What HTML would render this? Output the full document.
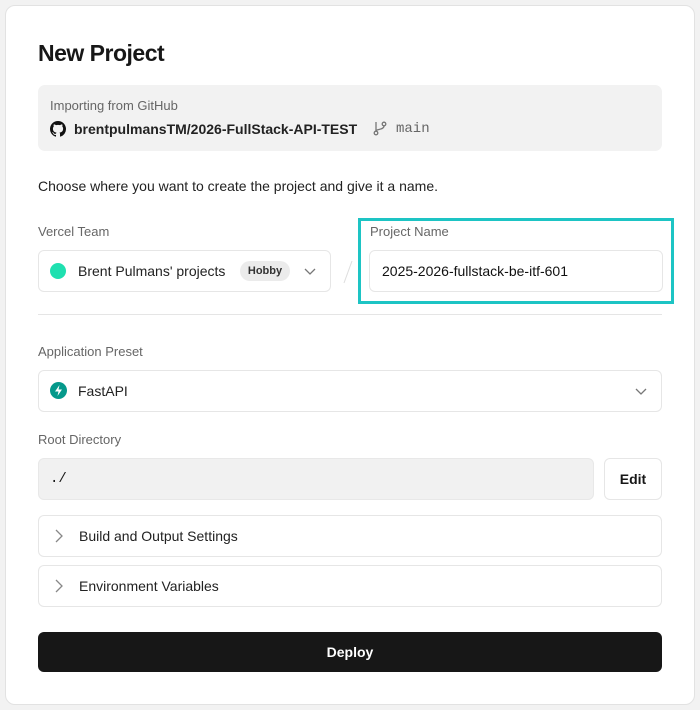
<!DOCTYPE html>
<html><head><style>
*{box-sizing:border-box;margin:0;padding:0}
body{width:700px;height:710px;background:#f2f2f2;font-family:"Liberation Sans",sans-serif;color:#171717;position:relative;overflow:hidden}
.card{position:absolute;left:5px;top:5px;width:690px;height:700px;background:#fff;border:1px solid #e2e2e2;border-radius:10px}
.a{position:absolute}
.box{position:absolute;border:1px solid #e6e6e6;border-radius:6px;background:#fff}
.lbl{position:absolute;font-size:13px;color:#666}
.t{font-size:14px;color:#222}
</style></head><body>
<div class="card"></div>
<div class="a" style="left:38px;top:40px;font-size:23px;font-weight:bold;letter-spacing:-0.5px">New Project</div>
<div class="a" style="left:38px;top:85px;width:624px;height:66px;background:#f2f2f2;border-radius:7px"></div>
<div class="lbl" style="left:50px;top:98px;font-size:13px">Importing from GitHub</div>
<svg class="a" style="left:50px;top:121px" width="16" height="16" viewBox="0 0 16 16"><path fill="#111" d="M8 0C3.58 0 0 3.58 0 8c0 3.54 2.29 6.53 5.47 7.59.4.07.55-.17.55-.38v-1.33c-2.23.48-2.7-1.07-2.7-1.07-.36-.93-.89-1.17-.89-1.17-.73-.5.05-.49.05-.49.8.06 1.23.83 1.23.83.72 1.23 1.88.87 2.34.66.07-.52.28-.87.51-1.07-1.78-.2-3.64-.89-3.64-3.95 0-.87.31-1.59.82-2.15-.08-.2-.36-1.02.08-2.12 0 0 .67-.21 2.2.82a7.6 7.6 0 014 0c1.53-1.04 2.2-.82 2.2-.82.44 1.1.16 1.92.08 2.12.51.56.82 1.27.82 2.15 0 3.07-1.87 3.75-3.65 3.95.29.25.54.73.54 1.48v2.2c0 .21.15.46.55.38A8.01 8.01 0 0016 8c0-4.42-3.58-8-8-8z"/></svg>
<div class="a" style="left:74px;top:121px;font-size:14px;font-weight:bold;color:#222">brentpulmansTM/2026-FullStack-API-TEST</div>
<svg class="a" style="left:372px;top:120px" width="16" height="16" viewBox="0 0 16 16" fill="none" stroke="#777" stroke-width="1.3"><circle cx="4" cy="13" r="1.8"/><path d="M4 2v9"/><circle cx="12" cy="4" r="1.8"/><path d="M12 6c0 4-8 3-8 5"/></svg>
<div class="a" style="left:396px;top:121px;font-family:'Liberation Mono',monospace;font-size:14px;color:#666">main</div>
<div class="a t" style="left:38px;top:178px">Choose where you want to create the project and give it a name.</div>
<div class="lbl" style="left:38px;top:224px">Vercel Team</div>
<div class="box" style="left:38px;top:250px;width:293px;height:42px"></div>
<div class="a" style="left:50px;top:263px;width:16px;height:16px;border-radius:50%;background:#1fe0b0"></div>
<div class="a t" style="left:78px;top:263px">Brent Pulmans' projects</div>
<div class="a" style="left:240px;top:261px;width:50px;height:20px;border-radius:10px;background:#ebebeb;font-size:11px;font-weight:bold;text-align:center;line-height:20px;color:#333">Hobby</div>
<svg class="a" style="left:303px;top:264px" width="14" height="14" viewBox="0 0 14 14" fill="none" stroke="#777" stroke-width="1.3"><path d="M2 5l5 5 5-5"/></svg>
<svg class="a" style="left:340px;top:260px" width="16" height="24"><path d="M4 23L12 1" stroke="#ddd"/></svg>
<div class="a" style="left:358px;top:218px;width:316px;height:86px;border:3px solid #1dc4c4"></div>
<div class="lbl" style="left:370px;top:224px">Project Name</div>
<div class="box" style="left:369px;top:250px;width:294px;height:42px"></div>
<div class="a" style="left:382px;top:263px;font-size:14px;color:#111">2025-2026-fullstack-be-itf-601</div>
<div class="a" style="left:38px;top:314px;width:624px;height:1px;background:#e5e5e5"></div>
<div class="lbl" style="left:38px;top:344px">Application Preset</div>
<div class="box" style="left:38px;top:370px;width:624px;height:42px"></div>
<svg class="a" style="left:50px;top:382px" width="17" height="17" viewBox="0 0 17 17"><circle cx="8.5" cy="8.5" r="8.5" fill="#05998b"/><path d="M9.5 3L5 9.5h3.5L7.5 14l4.5-6.5H8.5z" fill="#fff"/></svg>
<div class="a t" style="left:78px;top:383px">FastAPI</div>
<svg class="a" style="left:634px;top:384px" width="14" height="14" viewBox="0 0 14 14" fill="none" stroke="#777" stroke-width="1.3"><path d="M2 5l5 5 5-5"/></svg>
<div class="lbl" style="left:38px;top:432px">Root Directory</div>
<div class="a" style="left:38px;top:458px;width:556px;height:42px;background:#f1f1f1;border:1px solid #e8e8e8;border-radius:6px"></div>
<div class="a" style="left:50px;top:471px;font-family:'Liberation Mono',monospace;font-size:14px">./</div>
<div class="box" style="left:604px;top:458px;width:58px;height:42px;text-align:center;line-height:40px;font-size:14px;font-weight:bold">Edit</div>
<div class="box" style="left:38px;top:515px;width:624px;height:42px"></div>
<svg class="a" style="left:54px;top:528px" width="10" height="16" viewBox="0 0 10 16" fill="none" stroke="#888" stroke-width="1.3"><path d="M2 2l6 6-6 6"/></svg>
<div class="a t" style="left:79px;top:528px">Build and Output Settings</div>
<div class="box" style="left:38px;top:565px;width:624px;height:42px"></div>
<svg class="a" style="left:54px;top:578px" width="10" height="16" viewBox="0 0 10 16" fill="none" stroke="#888" stroke-width="1.3"><path d="M2 2l6 6-6 6"/></svg>
<div class="a t" style="left:79px;top:578px">Environment Variables</div>
<div class="a" style="left:38px;top:632px;width:624px;height:40px;background:#171717;border-radius:6px;color:#fff;text-align:center;line-height:40px;font-size:14px;font-weight:bold">Deploy</div>
</body></html>
